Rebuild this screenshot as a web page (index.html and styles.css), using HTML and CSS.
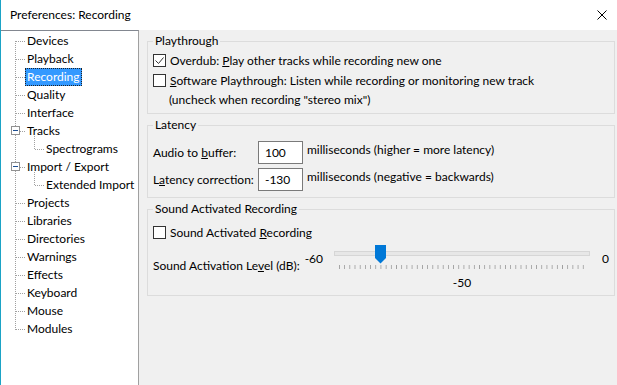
FILE: index.html
```html
<!DOCTYPE html>
<html>
<head>
    <title>Preferences: Recording</title>
    <link rel="stylesheet" href="styles.css">
</head>
<body>
<div class="window">

    <!-- Title bar -->
    <div class="titlebar">
        <span class="title">Preferences: Recording</span>
        <svg class="close" width="10" height="10" viewBox="0 0 10 10">
            <path d="M0.5 0.5 L9.5 9.5 M9.5 0.5 L0.5 9.5" stroke="#000" stroke-width="1" fill="none"/>
        </svg>
    </div>

    <div class="main">

        <!-- Category tree -->
        <div class="tree">
            <ul class="tree-list">
                <li class="node"><span class="label">Devices</span></li>
                <li class="node"><span class="label">Playback</span></li>
                <li class="node"><span class="label selected">Recording</span></li>
                <li class="node"><span class="label">Quality</span></li>
                <li class="node"><span class="label">Interface</span></li>
                <li class="node parent"><span class="toggle"></span><span class="label">Tracks</span></li>
                <li class="node child"><span class="label">Spectrograms</span></li>
                <li class="node parent"><span class="toggle"></span><span class="label">Import / Export</span></li>
                <li class="node child"><span class="label">Extended Import</span></li>
                <li class="node"><span class="label">Projects</span></li>
                <li class="node"><span class="label">Libraries</span></li>
                <li class="node"><span class="label">Directories</span></li>
                <li class="node"><span class="label">Warnings</span></li>
                <li class="node"><span class="label">Effects</span></li>
                <li class="node"><span class="label">Keyboard</span></li>
                <li class="node"><span class="label">Mouse</span></li>
                <li class="node"><span class="label">Modules</span></li>
            </ul>
        </div>

        <!-- Settings -->
        <div class="content">

            <fieldset class="group group-play">
                <legend>Playthrough</legend>
                <div class="check-row">
                    <span class="box checked">
                        <svg width="11" height="11" viewBox="0 0 11 11"><path d="M1.5 5.5 L4.5 8.5 L9.5 2.5" stroke="#333" stroke-width="1" fill="none"/></svg>
                    </span>
                    <span>Overdub: <u>P</u>lay other tracks while recording new one</span>
                </div>
                <div class="check-row">
                    <span class="box"></span>
                    <span><u>S</u>oftware Playthrough: Listen while recording or monitoring new track</span>
                </div>
                <div class="note">(uncheck when recording "stereo mix")</div>
            </fieldset>

            <fieldset class="group group-latency">
                <legend>Latency</legend>
                <div class="latency-grid">
                    <span class="field-label">Audio to <u>b</u>uffer:</span>
                    <input class="num" type="text" value="100">
                    <span class="unit">milliseconds (higher = more latency)</span>

                    <span class="field-label">L<u>a</u>tency correction:</span>
                    <input class="num" type="text" value="-130">
                    <span class="unit">milliseconds (negative = backwards)</span>
                </div>
            </fieldset>

            <fieldset class="group group-sound">
                <legend>Sound Activated Recording</legend>
                <div class="check-row">
                    <span class="box"></span>
                    <span>Sound Activated <u>R</u>ecording</span>
                </div>
                <div class="level-row">
                    <span class="level-label">Sound Activation Le<u>v</u>el (dB):</span>
                    <span class="range-min">-60</span>
                    <div class="slider">
                        <div class="track"></div>
                        <svg class="thumb" width="11" height="19" viewBox="0 0 11 19">
                            <path d="M0 0 H11 V13 L5.5 18.5 L0 13 Z" fill="#0078d7"/>
                        </svg>
                        <div class="ticks"></div>
                        <div class="value">-50</div>
                    </div>
                    <span class="range-max">0</span>
                </div>
            </fieldset>

        </div>
    </div>
</div>
</body>
</html>
```

FILE: styles.css
```css
body {
    margin: 0;
    font-family: Lato, "Liberation Sans", sans-serif;
    font-size: 12px;
    line-height: 16px;
    color: #000;
}
.window {
    height: 385px;
    border-left: 1px solid #1ba3c6;
    display: flex;
    flex-direction: column;
    background: #f0f0f0;
    overflow: hidden;
}
.titlebar {
    height: 30px;
    background: white;
    display: flex;
    align-items: center;
    justify-content: space-between;
    padding: 0 10px 0 9px;
}
.title {
    margin-top: -1px;
}
.close {
    margin-top: -1px;
}
.main {
    flex: 1;
    display: flex;
}

/* tree */
.tree {
    width: 137px;
    background: white;
    border-top: 1px solid #828790;
    border-right: 1px solid #a0a0a0;
    padding-top: 1px;
}
.tree-list {
    list-style: none;
    margin: 0;
    padding: 0;
    position: relative;
}
.tree-list::before {
    content: "";
    position: absolute;
    left: 14px;
    top: 9px;
    width: 1px;
    height: 289px;
    background-image: linear-gradient(to bottom, #a0a0a0 50%, transparent 50%);
    background-size: 1px 2px;
}
.node {
    position: relative;
    height: 18px;
    padding-left: 24px;
    white-space: nowrap;
}
.node::before {
    content: "";
    position: absolute;
    left: 15px;
    top: 9px;
    width: 9px;
    height: 1px;
    background-image: linear-gradient(to right, #a0a0a0 50%, transparent 50%);
    background-size: 2px 1px;
}
.child {
    padding-left: 43px;
}
.child::before {
    left: 34px;
    width: 9px;
}
.child::after {
    content: "";
    position: absolute;
    left: 33px;
    top: -4px;
    width: 1px;
    height: 13px;
    background-image: linear-gradient(to bottom, #a0a0a0 50%, transparent 50%);
    background-size: 1px 2px;
}
.label {
    display: inline-block;
    height: 18px;
    line-height: 18px;
    padding: 0 2px;
}
.label.selected {
    background: #3399ff;
    color: white;
    outline: 1px dotted #222;
    outline-offset: -1px;
}
.toggle {
    position: absolute;
    left: 10px;
    top: 4px;
    width: 7px;
    height: 7px;
    border: 1px solid #919191;
    background: white;
    z-index: 1;
}
.toggle::after {
    content: "";
    position: absolute;
    left: 1px;
    top: 3px;
    width: 5px;
    height: 1px;
    background: #1e4f92;
}

/* settings */
.content {
    flex: 1;
    padding: 3px 2px 0 8px;
}
.group {
    margin: 0;
    border: 1px solid #dcdcdc;
    padding: 0 5px;
    min-width: 0;
}
.group legend {
    padding: 0 2px;
    line-height: 16px;
}
.group-play {
    padding-top: 1px;
    padding-bottom: 3px;
}
.group-latency {
    margin-top: 3px;
    padding-top: 8px;
    padding-bottom: 6px;
}
.group-sound {
    margin-top: 3px;
    padding-top: 5px;
    padding-bottom: 4px;
}
.check-row {
    height: 20px;
    display: flex;
    align-items: center;
    gap: 4px;
    white-space: nowrap;
}
.check-row span:last-child {
    margin-top: 1px;
}
.box {
    width: 11px;
    height: 11px;
    border: 1px solid #333;
    background: white;
    display: flex;
    flex-shrink: 0;
}
.note {
    height: 20px;
    line-height: 20px;
    padding-left: 16px;
}
.latency-grid {
    display: grid;
    grid-template-columns: 101px 45px auto;
    column-gap: 4px;
    row-gap: 4px;
}
.field-label {
    align-self: center;
    white-space: nowrap;
}
.num {
    width: 45px;
    height: 23px;
    box-sizing: border-box;
    border: 1px solid #7a7a7a;
    padding: 0 6px;
    margin: 0;
    font: inherit;
    background: white;
}
.unit {
    margin-top: 1px;
    white-space: nowrap;
}
.level-row {
    display: flex;
    align-items: flex-start;
    margin-top: 3px;
    white-space: nowrap;
}
.level-label {
    margin-top: 13px;
}
.range-min {
    margin: 6px 0 0 5px;
}
.slider {
    position: relative;
    width: 256px;
    margin-left: 11px;
}
.track {
    margin-top: 6px;
    height: 3px;
    border: 1px solid #d6d6d6;
    background: #e7e7e7;
}
.thumb {
    position: absolute;
    left: 41px;
    top: 0;
}
.ticks {
    margin: 9px 5px 0 5px;
    height: 4px;
    background-image: linear-gradient(to right, #a0a0a0 1px, transparent 1px);
    background-size: 5.19px 4px;
}
.value {
    margin-top: 6px;
    text-align: center;
}
.range-max {
    margin: 6px 0 0 12px;
}
```
